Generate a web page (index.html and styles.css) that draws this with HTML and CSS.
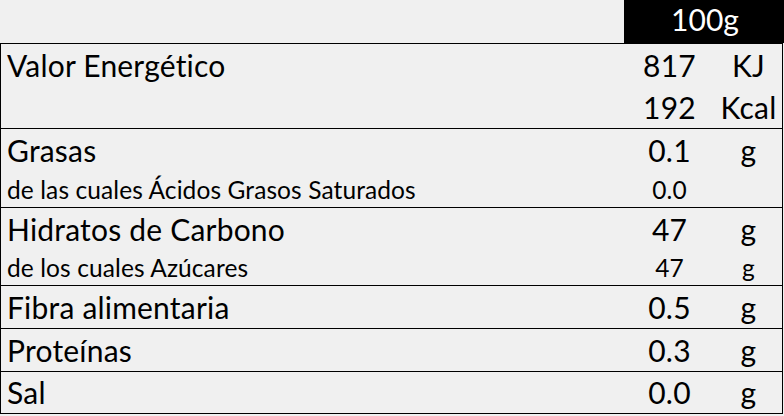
FILE: index.html
```html
<!DOCTYPE html>
<html lang="es">
<head>
<meta charset="utf-8">
<title>Información nutricional</title>
<link rel="stylesheet" href="styles.css">
</head>
<body>
<div class="page">
  <div class="head">
    <div class="head-cell">100g</div>
  </div>
  <div class="table">
    <div class="row">
      <div class="line big"><span class="label">Valor Energético</span><span class="val">817</span><span class="unit">KJ</span></div>
      <div class="line big"><span class="label"></span><span class="val">192</span><span class="unit">Kcal</span></div>
    </div>
    <div class="row">
      <div class="line big main"><span class="label">Grasas</span><span class="val">0.1</span><span class="unit">g</span></div>
      <div class="line small sub35"><span class="label">de las cuales Ácidos Grasos Saturados</span><span class="val">0.0</span><span class="unit"></span></div>
    </div>
    <div class="row">
      <div class="line big main"><span class="label">Hidratos de Carbono</span><span class="val">47</span><span class="unit">g</span></div>
      <div class="line small sub34"><span class="label">de los cuales Azúcares</span><span class="val">47</span><span class="unit">g</span></div>
    </div>
    <div class="row">
      <div class="line big"><span class="label">Fibra alimentaria</span><span class="val">0.5</span><span class="unit">g</span></div>
    </div>
    <div class="row">
      <div class="line big"><span class="label">Proteínas</span><span class="val">0.3</span><span class="unit">g</span></div>
    </div>
    <div class="row last">
      <div class="line big short"><span class="label">Sal</span><span class="val">0.0</span><span class="unit">g</span></div>
    </div>
  </div>
</div>
</body>
</html>
```

FILE: styles.css
```css
* { box-sizing: border-box; }
html, body {
  margin: 0;
  padding: 0;
  background: #f0f0f0;
}
body {
  font-family: Lato, "Open Sans", sans-serif;
  color: #000;
  width: 784px;
  height: 416px;
  overflow: hidden;
}
.head {
  height: 43px;
  display: flex;
  justify-content: flex-end;
}
.head-cell {
  width: 160px;
  background: #000;
  color: #fff;
  font-size: 30px;
  line-height: 38px;
  text-align: center;
  padding-left: 2px;
}
.table {
  width: 783px;
  border-left: 1px solid #000;
  border-right: 1px solid #000;
  border-top: 1px solid #000;
}
.row {
  border-bottom: 1px solid #000;
}
.line {
  display: grid;
  grid-template-columns: 1fr 91px 67px;
}
.big {
  font-size: 30px;
  line-height: 42px;
  height: 42px;
  letter-spacing: 0.2px;
}
.main {
  line-height: 43px;
  height: 43px;
}
.short {
  line-height: 41px;
  height: 41px;
}
.small {
  font-size: 24.5px;
  letter-spacing: 0.1px;
}
.sub35 { line-height: 35px; height: 35px; }
.sub34 { line-height: 34px; height: 34px; }
.label {
  padding-left: 6px;
  white-space: nowrap;
}
.val {
  text-align: center;
}
.unit {
  text-align: center;
}
```
